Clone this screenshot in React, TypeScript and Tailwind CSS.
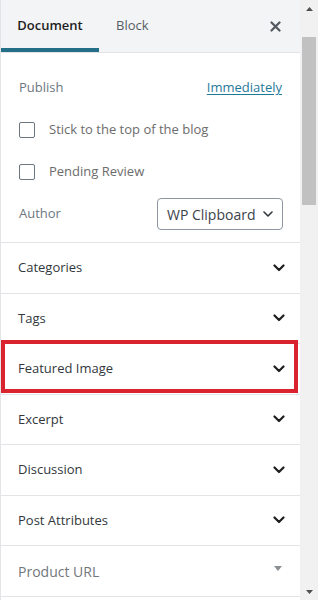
import React from "react";

const font = { fontFamily: '"Open Sans", "Noto Sans", sans-serif' };

const Chevron = () => (
  <svg width="12" height="8" viewBox="0 0 12 8" fill="none">
    <polyline points="1.5,1.5 6,6 10.5,1.5" stroke="#1e1e1e" strokeWidth="2.2" strokeLinecap="round" strokeLinejoin="round" />
  </svg>
);

const panels = ["Categories", "Tags", "Featured Image", "Excerpt", "Discussion", "Post Attributes"];

const Checkbox = ({ label }: { label: string }) => (
  <div className="flex h-[42px] items-center px-[18px]">
    <span className="h-[16px] w-[16px] rounded-[2px] border-[1.5px] border-[#6c7781] bg-white" />
    <span className="ml-[14px] text-[13px] text-[#6c6c6c]">{label}</span>
  </div>
);

export default function App() {
  return (
    <div className="flex h-[600px] w-[318px] overflow-hidden bg-white" style={font}>
      <div className="flex w-[300px] flex-col border-l border-[#e2e4e7]">
        {/* header tabs */}
        <div className="relative z-10 flex h-[53px] shrink-0 items-stretch border-b border-[#e2e4e7] bg-[#f3f4f5]">
          <div className="flex w-[98px] items-center justify-center border-b-4 border-[#246f87] pt-[4px] text-[13px] font-semibold text-[#1e1e1e]">
            Document
          </div>
          <div className="flex items-center px-[17px] text-[13px] text-[#555d66]">Block</div>
          <div className="ml-auto flex items-center pr-[19px]">
            <svg width="11" height="11" viewBox="0 0 11 11">
              <path d="M1.5 1.5l8 8M9.5 1.5l-8 8" stroke="#50575e" strokeWidth="2.2" strokeLinecap="round" />
            </svg>
          </div>
        </div>

        <div className="flex flex-1 flex-col overflow-hidden">
          {/* status & visibility, scrolled so the first row sits under the tabs */}
          <div className="-mt-[28px] flex flex-col pb-[7px]">
            <div className="flex h-[42px] items-center justify-between px-[18px] text-[13px]">
              <span className="text-[#6c7781]">Visibility</span>
              <span className="text-[#1f7a99] underline underline-offset-2">Public</span>
            </div>
            <div className="flex h-[42px] items-center justify-between px-[18px] text-[13px]">
              <span className="text-[#6c7781]">Publish</span>
              <span className="text-[#1f7a99] underline underline-offset-2">Immediately</span>
            </div>
            <Checkbox label="Stick to the top of the blog" />
            <Checkbox label="Pending Review" />
            <div className="flex h-[42px] items-center justify-between pl-[18px] pr-[17px]">
              <span className="text-[13px] text-[#6c7781]">Author</span>
              <div className="flex h-[32px] w-[126px] items-center justify-between rounded-[4px] border border-[#8d96a0] pl-[9px] pr-[9px] text-[14px] text-[#3c434a]">
                <span>WP Clipboard</span>
                <svg width="10" height="6" viewBox="0 0 10 6" fill="none">
                  <polyline points="1,1 5,5 9,1" stroke="#32373c" strokeWidth="1.6" strokeLinecap="round" strokeLinejoin="round" />
                </svg>
              </div>
            </div>
          </div>

          {/* panels */}
          {panels.map((p) => (
            <div key={p} className="relative flex h-[50.5px] shrink-0 items-center justify-between border-t border-[#e2e4e7] pl-[17px] pr-[15px]">
              <span className="text-[13px] font-medium text-[#32373c]">{p}</span>
              <Chevron />
              {p === "Featured Image" && (
                <div className="absolute -top-[4px] left-0 right-[2px] h-[53px] border-4 border-[#d9232e]" />
              )}
            </div>
          ))}
          <div className="flex h-[52px] shrink-0 items-center justify-between border-y border-[#e2e4e7] pl-[17px] pr-[18px]">
            <span className="text-[14px] font-medium text-[#72777c]">Product URL</span>
            <svg width="8" height="5" viewBox="0 0 8 5" className="-mt-[6px]">
              <path d="M0 0h8L4 5z" fill="#8a8f94" />
            </svg>
          </div>
        </div>
      </div>

      {/* scrollbar */}
      <div className="flex w-[18px] flex-col items-center bg-[#f1f1f1]">
        <div className="flex h-[17px] items-center justify-center">
          <svg width="7" height="4" viewBox="0 0 7 4">
            <path d="M0 4h7L3.5 0z" fill="#505050" />
          </svg>
        </div>
        <div className="mt-[20px] h-[168px] w-[14px] bg-[#c1c1c1]" />
        <div className="mt-auto flex h-[17px] items-center justify-center">
          <svg width="7" height="4" viewBox="0 0 7 4">
            <path d="M0 0h7L3.5 4z" fill="#505050" />
          </svg>
        </div>
      </div>
    </div>
  );
}
